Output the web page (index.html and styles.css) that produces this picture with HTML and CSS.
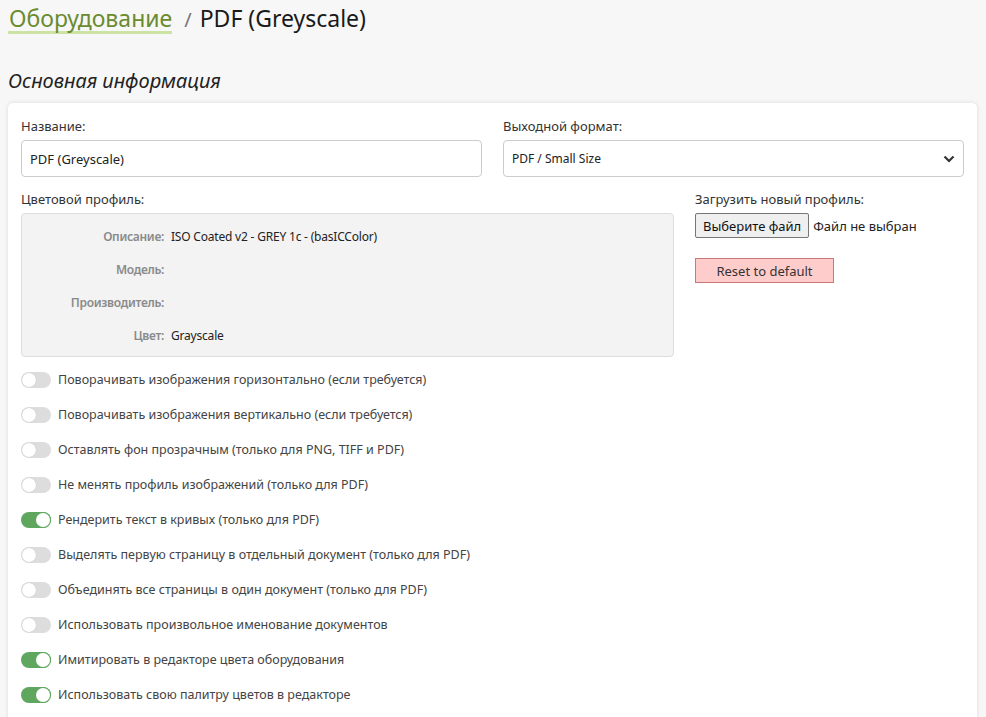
FILE: index.html
```html
<!DOCTYPE html>
<html lang="ru">
<head>
<meta charset="utf-8">
<title>PDF (Greyscale)</title>
<link rel="stylesheet" href="styles.css">
</head>
<body>
<div class="page">
  <h1 class="crumbs"><a class="crumb-link" href="#">Оборудование</a><span class="sep">/</span><span class="crumb-cur">PDF (Greyscale)</span></h1>
  <h2 class="section-title">Основная информация</h2>
  <div class="card">
    <div class="row">
      <div class="col">
        <label class="lbl">Название:</label>
        <div class="input">PDF (Greyscale)</div>
      </div>
      <div class="col">
        <label class="lbl">Выходной формат:</label>
        <div class="input select">
          <span>PDF / Small Size</span>
          <svg class="chev" width="12" height="8" viewBox="0 0 12 8"><path d="M1.5 1.5 L6 6 L10.5 1.5" fill="none" stroke="#333" stroke-width="2.2"/></svg>
        </div>
      </div>
    </div>
    <div class="row row2">
      <div class="col-wide">
        <label class="lbl">Цветовой профиль:</label>
        <div class="profile">
          <div class="prow"><span class="pk">Описание:</span><span class="pv">ISO Coated v2 - GREY 1c - (basICColor)</span></div>
          <div class="prow"><span class="pk">Модель:</span><span class="pv"></span></div>
          <div class="prow"><span class="pk">Производитель:</span><span class="pv"></span></div>
          <div class="prow"><span class="pk">Цвет:</span><span class="pv">Grayscale</span></div>
        </div>
      </div>
      <div class="col-narrow">
        <label class="lbl">Загрузить новый профиль:</label>
        <div class="file"><span class="file-btn">Выберите файл</span><span class="file-name">Файл не выбран</span></div>
        <span class="reset">Reset to default</span>
      </div>
    </div>
    <div class="toggles">
      <div class="tg"><span class="sw"></span><span>Поворачивать изображения горизонтально (если требуется)</span></div>
      <div class="tg"><span class="sw"></span><span>Поворачивать изображения вертикально (если требуется)</span></div>
      <div class="tg"><span class="sw"></span><span>Оставлять фон прозрачным (только для PNG, TIFF и PDF)</span></div>
      <div class="tg"><span class="sw"></span><span>Не менять профиль изображений (только для PDF)</span></div>
      <div class="tg"><span class="sw on"></span><span>Рендерить текст в кривых (только для PDF)</span></div>
      <div class="tg"><span class="sw"></span><span>Выделять первую страницу в отдельный документ (только для PDF)</span></div>
      <div class="tg"><span class="sw"></span><span>Объединять все страницы в один документ (только для PDF)</span></div>
      <div class="tg"><span class="sw"></span><span>Использовать произвольное именование документов</span></div>
      <div class="tg"><span class="sw on"></span><span>Имитировать в редакторе цвета оборудования</span></div>
      <div class="tg"><span class="sw on"></span><span>Использовать свою палитру цветов в редакторе</span></div>
    </div>
  </div>
</div>
</body>
</html>
```
FILE: styles.css
```css
* { box-sizing: border-box; }
html, body { margin: 0; padding: 0; }
body {
  background: #f7f7f7;
  font-family: "Noto Sans", "Open Sans", sans-serif;
  color: #222;
  overflow: hidden;
}
.page { padding: 0 9px 0 8px; }
.crumbs {
  margin: 0;
  padding-top: 2px;
  font-weight: 400;
  font-size: 23px;
  line-height: 32px;
  display: flex;
  align-items: baseline;
}
.crumb-link {
  color: #6b8b2f;
  text-decoration: none;
  border-bottom: 3px solid #cde3a4;
  line-height: 26px;
  padding-left: 1px;
}
.sep { color: #777; margin: 0 8px 0 12px; font-size: 20px; }
.crumb-cur { color: #1a1a1a; }
.section-title {
  margin: 31px 0 0 0;
  font-weight: 400;
  font-style: italic;
  font-size: 20px;
  line-height: 28px;
  color: #222;
}
.card {
  margin-top: 8px;
  background: #fff;
  border-radius: 5px;
  box-shadow: 0 0 4px rgba(0,0,0,0.12);
  padding: 14px 13px 20px 13px;
  font-size: 13px;
}
.row { display: flex; gap: 21px; }
.col { flex: 1 1 0; }
.row2 { margin-top: 13px; }
.col-wide { width: 653px; }
.col-narrow { flex: 1; }
.lbl { display: block; color: #333; font-size: 13px; line-height: 18px; margin-bottom: 5px; }
.input {
  height: 37px;
  border: 1px solid #ccc;
  border-radius: 4px;
  padding: 0 8px;
  display: flex;
  align-items: center;
  font-size: 13px;
  color: #222;
}
.select { justify-content: space-between; font-size: 12px; }
.chev { margin-right: 0; }
.profile {
  height: 144px;
  background: #f3f3f3;
  border: 1px solid #ddd;
  border-radius: 4px;
  padding: 14px 0 0 0;
}
.prow { display: flex; height: 33px; line-height: 18px; font-size: 12px; }
.pk { width: 149px; text-align: right; color: #8a8a8a; font-weight: 600; padding-right: 7px; letter-spacing: -0.3px; }
.pv { color: #222; letter-spacing: -0.2px; }
.file { display: flex; align-items: center; height: 25px; }
.file-btn {
  height: 25px;
  border: 1px solid #767676;
  border-radius: 2px;
  background: #efefef;
  padding: 0 7px;
  display: flex; align-items: center;
  color: #111;
  font-size: 13px;
}
.file-name { margin-left: 4px; color: #222; }
.reset {
  display: inline-flex;
  align-items: center;
  justify-content: center;
  margin-top: 20px;
  width: 139px;
  height: 25px;
  background: #ffcccc;
  border: 1px solid #c97777;
  color: #333;
  font-size: 13px;
}
.toggles { margin-top: 5px; }
.tg { display: flex; align-items: center; height: 35px; color: #444; font-size: 12.5px; }
.sw {
  position: relative;
  width: 30px; height: 16px;
  border-radius: 8px;
  background: #ddd;
  margin-right: 7px;
  flex: none;
}
.sw::after {
  content: "";
  position: absolute;
  top: 1px; left: 1px;
  width: 14px; height: 14px;
  border-radius: 50%;
  background: #fff;
  box-shadow: 0 0 1px rgba(0,0,0,0.2);
}
.sw.on { background: #5fa75f; }
.sw.on::after { left: 15px; box-shadow: 0 0 0 1px #5fa75f; }
```
